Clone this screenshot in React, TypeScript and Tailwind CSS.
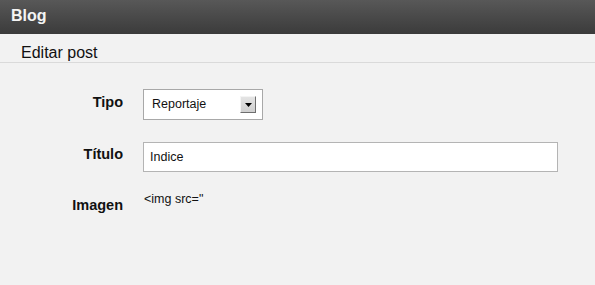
import React from "react";

export default function App() {
  return (
    <div className="w-[595px] h-[285px] bg-[#f2f2f2] font-['Liberation_Sans',Arial,sans-serif] overflow-hidden">
      <div className="h-[34px] bg-gradient-to-b from-[#585858] to-[#3b3b3b] pl-[11px] flex items-center pb-[2px]">
        <span className="text-[#f4f4f4] font-bold text-[16px] leading-[18px]">Blog</span>
      </div>
      <div className="h-[29px] border-b border-[#dadada] pl-[21px] pt-[9px]">
        <div className="text-[16px] leading-[19px] text-[#111]">Editar post</div>
      </div>
      <div className="pt-[26px]">
        <div className="flex items-start">
          <div className="w-[123px] text-right font-bold text-[14.5px] leading-[16px] text-[#111] mt-[5px]">Tipo</div>
          <div className="ml-[20px] w-[120px] h-[31px] border border-[#a8a8a8] bg-white flex items-center justify-between pl-[8px] pr-[6px]">
            <span className="text-[12.5px] leading-[15px] text-[#111]">Reportaje</span>
            <div className="w-[16px] h-[17px] border border-t-[#f4f4f4] border-l-[#f4f4f4] border-r-[#6e6e6e] border-b-[#6e6e6e] bg-gradient-to-b from-[#e4e4e4] to-[#cfcfcf] flex items-center justify-center">
              <svg width="7" height="4" viewBox="0 0 7 4">
                <path d="M0 0 H7 L3.5 4 Z" fill="#000" />
              </svg>
            </div>
          </div>
        </div>
        <div className="flex items-start mt-[22px]">
          <div className="w-[123px] text-right font-bold text-[14.5px] leading-[16px] text-[#111] mt-[4px]">Título</div>
          <div className="ml-[20px] w-[415px] h-[30px] border border-[#b4b4b4] bg-white flex items-center pl-[6px]">
            <span className="text-[12.5px] leading-[15px] text-[#111]">Indice</span>
          </div>
        </div>
        <div className="flex items-start mt-[20px]">
          <div className="w-[123px] text-right font-bold text-[14.5px] leading-[16px] text-[#111] mt-[5px]">Imagen</div>
          <div className="ml-[21px] text-[12.5px] leading-[15px] text-[#111]">{'<img src="'}</div>
        </div>
      </div>
    </div>
  );
}
